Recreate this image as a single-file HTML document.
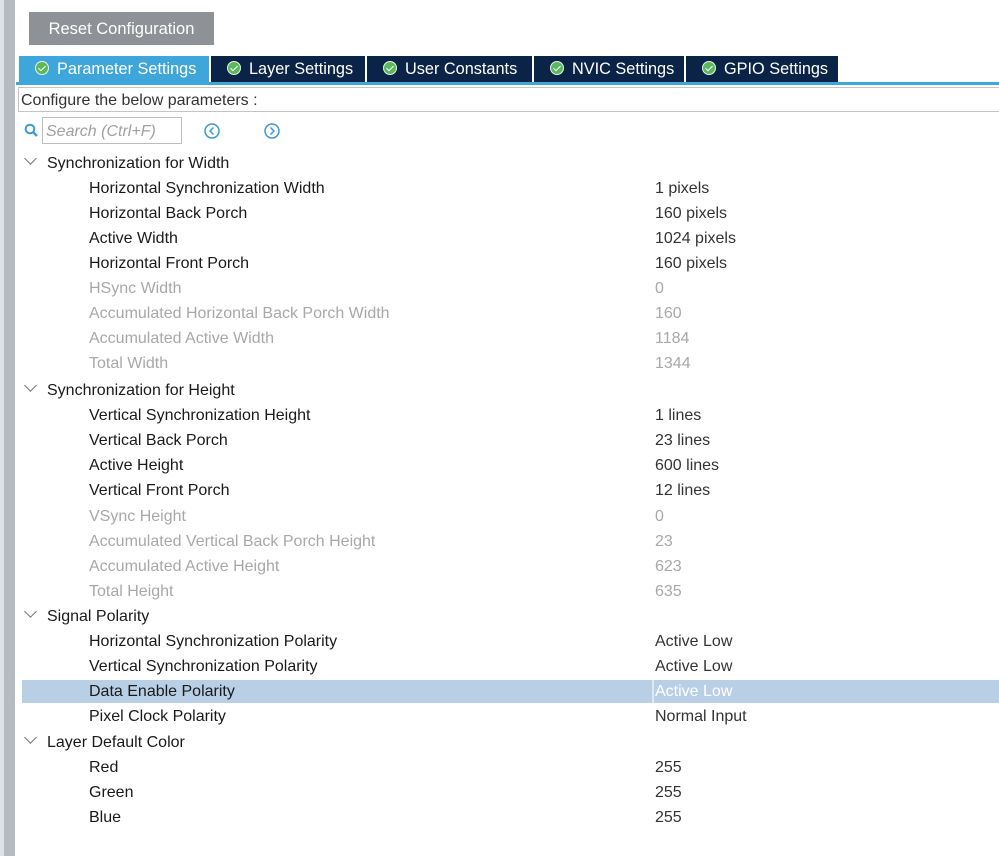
<!DOCTYPE html>
<html><head><meta charset="utf-8"><style>
*{margin:0;padding:0;box-sizing:border-box}
body{width:999px;height:856px;background:#fff;position:relative;overflow:hidden;font-family:"Liberation Sans",Arial,sans-serif;font-size:16px;color:#1a1a1a}
.a{position:absolute;white-space:nowrap}
.lb1{left:0;top:0;width:4px;height:856px;background:#dde2e6}
.lb2{left:4px;top:0;width:11px;height:856px;background:#b4bcc2}
.btn{left:29px;top:12px;width:185px;height:33px;background:#8e9296;color:#fff;font-size:16.5px;line-height:35px;text-align:center}
.tab{top:56px;height:26px;background:#0b2346;color:#fff;font-size:16.3px;line-height:27px;padding-left:16px}
.tab.on{background:#3ea6da}
.ck{display:inline-block;width:14px;height:14px;border-radius:50%;background:#5cb85c;border:1.5px solid #e8f4e8;vertical-align:-1px;margin-right:8px;position:relative}
.ck:after{content:"";position:absolute;left:3.5px;top:1.5px;width:3px;height:6px;border:solid #fff;border-width:0 1.8px 1.8px 0;transform:rotate(45deg)}
.line{left:16px;top:82px;width:983px;height:3px;background:#3ea6da}
.cfg{left:18px;top:87px;width:990px;height:25px;border:1px solid #c4c4c4;line-height:25px;padding-left:2px;color:#333}
.srch{left:42px;top:117px;width:140px;height:27px;border:1px solid #bdbdbd;color:#a0a0a0;font-style:italic;line-height:27px;padding-left:3px}
.r{height:25px;line-height:27px}
.h{left:47px}
.n{left:89px}
.v{left:655px;color:#333}
.g{color:#a8a8a8}
.hl{left:22px;width:977px;top:680px;height:23px;background:#b8cfe6}
.chev{left:26px;width:9px;height:9px;border:solid #777;border-width:0 1.2px 1.2px 0;transform:rotate(45deg)}
</style></head><body>
<div class="a lb1"></div><div class="a lb2"></div>
<div class="a btn">Reset Configuration</div>
<div class="a tab on" style="left:19px;width:190px"><span class="ck"></span>Parameter Settings</div>
<div class="a tab" style="left:211px;width:154px"><span class="ck"></span>Layer Settings</div>
<div class="a tab" style="left:367px;width:165px"><span class="ck"></span>User Constants</div>
<div class="a tab" style="left:534px;width:150px"><span class="ck"></span>NVIC Settings</div>
<div class="a tab" style="left:686px;width:152px"><span class="ck"></span>GPIO Settings</div>
<div class="a line"></div>
<div class="a cfg">Configure the below parameters :</div>
<svg class="a" style="left:24px;top:123px" width="16" height="16"><circle cx="6" cy="6" r="4.3" fill="none" stroke="#3a9ad6" stroke-width="2"/><line x1="9" y1="9" x2="13" y2="13" stroke="#3a9ad6" stroke-width="2.4"/></svg>
<div class="a srch">Search (Ctrl+F)</div>
<svg class="a" style="left:203px;top:122px" width="18" height="18"><circle cx="9" cy="9" r="7" fill="none" stroke="#3a9ad6" stroke-width="1.5"/><polyline points="10.5,5.5 7,9 10.5,12.5" fill="none" stroke="#3a9ad6" stroke-width="1.5"/></svg>
<svg class="a" style="left:263px;top:122px" width="18" height="18"><circle cx="9" cy="9" r="7" fill="none" stroke="#3a9ad6" stroke-width="1.5"/><polyline points="7.5,5.5 11,9 7.5,12.5" fill="none" stroke="#3a9ad6" stroke-width="1.5"/></svg>
<div class="a hl"></div>
<div class="a" style="left:652px;top:680px;width:2px;height:23px;background:#dde8f3"></div>

<div class="a chev" style="top:154px"></div><div class="a r h" style="top:150px">Synchronization for Width</div>
<div class="a r n" style="top:175px">Horizontal Synchronization Width</div><div class="a r v" style="top:175px">1 pixels</div>
<div class="a r n" style="top:200px">Horizontal Back Porch</div><div class="a r v" style="top:200px">160 pixels</div>
<div class="a r n" style="top:225px">Active Width</div><div class="a r v" style="top:225px">1024 pixels</div>
<div class="a r n" style="top:250px">Horizontal Front Porch</div><div class="a r v" style="top:250px">160 pixels</div>
<div class="a r n g" style="top:275px">HSync Width</div><div class="a r v g" style="top:275px">0</div>
<div class="a r n g" style="top:300px">Accumulated Horizontal Back Porch Width</div><div class="a r v g" style="top:300px">160</div>
<div class="a r n g" style="top:325px">Accumulated Active Width</div><div class="a r v g" style="top:325px">1184</div>
<div class="a r n g" style="top:350px">Total Width</div><div class="a r v g" style="top:350px">1344</div>
<div class="a chev" style="top:381px"></div><div class="a r h" style="top:377px">Synchronization for Height</div>
<div class="a r n" style="top:402px">Vertical Synchronization Height</div><div class="a r v" style="top:402px">1 lines</div>
<div class="a r n" style="top:427px">Vertical Back Porch</div><div class="a r v" style="top:427px">23 lines</div>
<div class="a r n" style="top:452px">Active Height</div><div class="a r v" style="top:452px">600 lines</div>
<div class="a r n" style="top:477px">Vertical Front Porch</div><div class="a r v" style="top:477px">12 lines</div>
<div class="a r n g" style="top:503px">VSync Height</div><div class="a r v g" style="top:503px">0</div>
<div class="a r n g" style="top:528px">Accumulated Vertical Back Porch Height</div><div class="a r v g" style="top:528px">23</div>
<div class="a r n g" style="top:553px">Accumulated Active Height</div><div class="a r v g" style="top:553px">623</div>
<div class="a r n g" style="top:578px">Total Height</div><div class="a r v g" style="top:578px">635</div>
<div class="a chev" style="top:607px"></div><div class="a r h" style="top:603px">Signal Polarity</div>
<div class="a r n" style="top:628px">Horizontal Synchronization Polarity</div><div class="a r v" style="top:628px">Active Low</div>
<div class="a r n" style="top:653px">Vertical Synchronization Polarity</div><div class="a r v" style="top:653px">Active Low</div>
<div class="a r n" style="top:678px">Data Enable Polarity</div><div class="a r v" style="top:678px;color:#fff">Active Low</div>
<div class="a r n" style="top:703px">Pixel Clock Polarity</div><div class="a r v" style="top:703px">Normal Input</div>
<div class="a chev" style="top:733px"></div><div class="a r h" style="top:729px">Layer Default Color</div>
<div class="a r n" style="top:754px">Red</div><div class="a r v" style="top:754px">255</div>
<div class="a r n" style="top:779px">Green</div><div class="a r v" style="top:779px">255</div>
<div class="a r n" style="top:804px">Blue</div><div class="a r v" style="top:804px">255</div>
</body></html>
